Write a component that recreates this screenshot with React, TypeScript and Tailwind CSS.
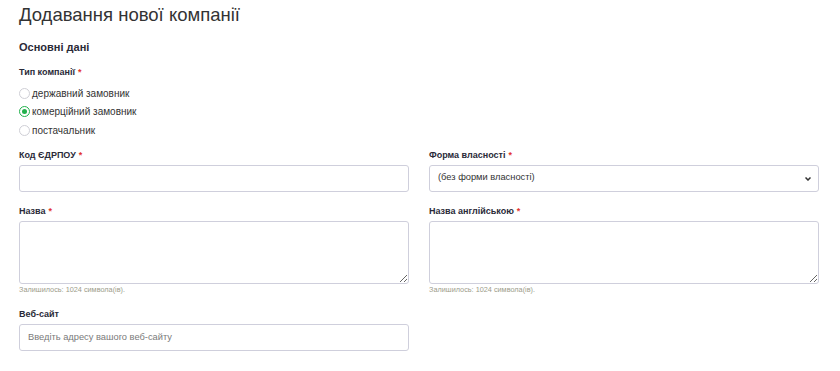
import { useState } from "react";

const font = { fontFamily: '"Liberation Sans", Arial, sans-serif' };

function Label({ text, required, gap = "mb-[4px]" }: { text: string; required?: boolean; gap?: string }) {
  return (
    <div className={`${gap} text-[9px] font-bold leading-[11px] text-[#2a2a38]`}>
      {text}
      {required ? <span className="ml-[3px] text-[#e3342f]">*</span> : null}
    </div>
  );
}

function Hint() {
  return (
    <div className="mt-[1px] text-[7.3px] leading-[10px] text-[#9c9c8a]">
      Залишилось: 1024 символа(ів).
    </div>
  );
}

export default function App() {
  const [type, setType] = useState("commercial");
  const types = [
    { id: "state", name: "державний замовник" },
    { id: "commercial", name: "комерційний замовник" },
    { id: "supplier", name: "постачальник" },
  ];

  const inputCls =
    "block h-[27px] w-full rounded-[3px] border border-[#cfcfdc] bg-white px-[8px] text-[9.3px] text-[#333] outline-none placeholder:text-[#7a7a7a]";
  const areaCls =
    "block h-[63px] w-full rounded-[3px] border border-[#cfcfdc] bg-white px-[8px] text-[9.3px] outline-none";

  return (
    <div className="min-h-[371px] w-[840px] bg-white px-[19px] pt-[4px]" style={font}>
      <h1 className="text-[18.5px] font-normal leading-[22px] text-[#333]">
        Додавання нової компанії
      </h1>

      <h2 className="mt-[14px] text-[11px] font-bold leading-[14px] text-[#2a2a38]">
        Основні дані
      </h2>

      <div className="mt-[13px]">
        <Label text="Тип компанії" required gap="mb-[6px]" />
        <div className="flex flex-col">
          {types.map((t) => (
            <label
              key={t.id}
              className="flex h-[18.5px] items-center text-[10px] text-[#333]"
              onClick={() => setType(t.id)}
            >
              <span
                className={`mr-[2px] flex h-[11px] w-[11px] items-center justify-center rounded-full border ${
                  type === t.id ? "border-[#22b14c]" : "border-[#cfcfd6]"
                }`}
              >
                {type === t.id ? (
                  <span className="h-[5px] w-[5px] rounded-full bg-[#22b14c]" />
                ) : null}
              </span>
              {t.name}
            </label>
          ))}
        </div>
      </div>

      <div className="mt-[10px] grid w-[800px] grid-cols-2 gap-x-[20px]">
        <div>
          <Label text="Код ЄДРПОУ" required />
          <input className={inputCls} />
        </div>
        <div>
          <Label text="Форма власності" required />
          <div className="relative">
            <select className={`${inputCls} appearance-none`}>
              <option>(без форми власності)</option>
            </select>
            <svg
              className="pointer-events-none absolute right-[8px] top-[12px]"
              width="6"
              height="4"
              viewBox="0 0 6 4"
            >
              <path d="M0.5 0.5 L3 3 L5.5 0.5" fill="none" stroke="#333" strokeWidth="1.5" />
            </svg>
          </div>
        </div>

        <div className="mt-[14px]">
          <Label text="Назва" required />
          <textarea className={areaCls} />
          <Hint />
        </div>
        <div className="mt-[14px]">
          <Label text="Назва англійською" required />
          <textarea className={areaCls} />
          <Hint />
        </div>

        <div className="mt-[14px]">
          <Label text="Веб-сайт" />
          <input className={inputCls} placeholder="Введіть адресу вашого веб-сайту" />
        </div>
      </div>
    </div>
  );
}
